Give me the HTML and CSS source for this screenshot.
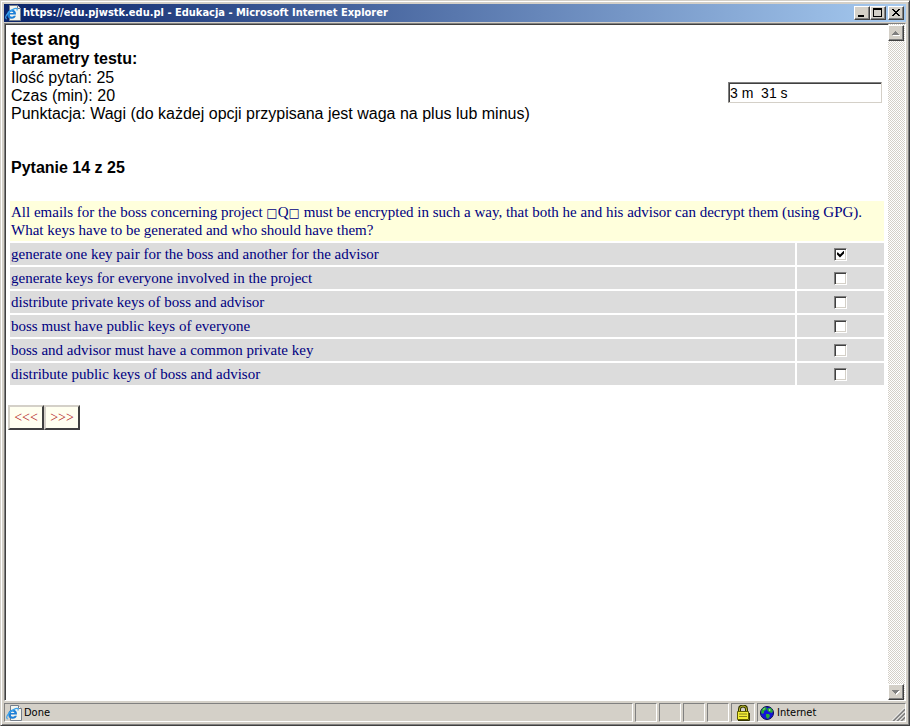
FILE: index.html
```html
<!DOCTYPE html>
<html lang="pl">
<head>
<meta charset="utf-8">
<title>https://edu.pjwstk.edu.pl - Edukacja</title>
<link rel="stylesheet" href="styles.css">
</head>
<body>
<svg class="defs" width="0" height="0" aria-hidden="true">
  <symbol id="ie-page" viewBox="0 0 16 16">
    <path d="M4.500.5h8l3 3v12h-11z" fill="#f5f5ee" stroke="#77808c"/>
    <path d="M12.500.5v3h3" fill="#fff" stroke="#77808c"/>
    <path d="M11 9.500H4.500q.3 2.200 2.400 2.200 1.200 0 2-.9h2q-1 3-4.200 3-4.400 0-4.400-4.500 0-4.500 4.500-4.500 4.400 0 4.200 4.700zM4.700 7.900h3.800q-.2-1.500-1.900-1.500-1.500 0-1.900 1.500z" fill="#1d7fd6"/>
    <path d="M1.800 14q-2-.6-.4-3.700Q4.500 5.500 9.500 3.600q3.600-1 2.300 1.800" fill="none" stroke="#3aa3ee" stroke-width="1.200"/>
  </symbol>
</svg>
<div class="window">
  <header class="titlebar">
    <svg class="icon" aria-hidden="true"><use href="#ie-page"/></svg>
    <h1 class="title">https://edu.pjwstk.edu.pl - Edukacja - Microsoft Internet Explorer</h1>
    <div class="controls">
      <button class="control" aria-label="Minimize"><svg width="12" height="10" shape-rendering="crispEdges"><path d="M2 7h6v2H2z"/></svg></button>
      <button class="control" aria-label="Maximize"><svg width="12" height="10" shape-rendering="crispEdges"><path d="M1 0h9v9H1zM2 2v6h7V2z" fill-rule="evenodd"/></svg></button>
      <button class="control close" aria-label="Close"><svg width="12" height="10" shape-rendering="crispEdges"><path d="M2 1h2v1h1v1h2V2h1V1h2v1H9v1H8v1H7v1h1v1h1v1h1v1H8V7H7V6H5v1H4v1H2V7h1V6h1V5h1V4H4V3H3V2H2z"/></svg></button>
    </div>
  </header>

  <div class="viewport">
    <main class="page">
      <section class="intro">
        <div class="params">
          <h2 class="test-name">test ang</h2>
          <h3 class="heading">Parametry testu:</h3>
          <p>Ilość pytań: 25</p>
          <p>Czas (min): 20</p>
          <p>Punktacja: Wagi (do każdej opcji przypisana jest waga na plus lub minus)</p>
        </div>
        <input class="timer" type="text" aria-label="Czas" value="3 m  31 s" readonly>
      </section>
      <h3 class="heading counter">Pytanie 14 z 25</h3>
      <form>
        <table class="question">
          <thead>
            <tr><th colspan="2">All emails for the boss concerning project <span class="glyph">□</span>Q<span class="glyph">□</span> must be encrypted in such a way, that both he and his advisor can decrypt them (using GPG). What keys have to be generated and who should have them?</th></tr>
          </thead>
          <tbody>
            <tr><td><label for="a1">generate one key pair for the boss and another for the advisor</label></td><td class="pick"><input type="checkbox" id="a1" checked></td></tr>
            <tr><td><label for="a2">generate keys for everyone involved in the project</label></td><td class="pick"><input type="checkbox" id="a2"></td></tr>
            <tr><td><label for="a3">distribute private keys of boss and advisor</label></td><td class="pick"><input type="checkbox" id="a3"></td></tr>
            <tr><td><label for="a4">boss must have public keys of everyone</label></td><td class="pick"><input type="checkbox" id="a4"></td></tr>
            <tr><td><label for="a5">boss and advisor must have a common private key</label></td><td class="pick"><input type="checkbox" id="a5"></td></tr>
            <tr><td><label for="a6">distribute public keys of boss and advisor</label></td><td class="pick"><input type="checkbox" id="a6"></td></tr>
          </tbody>
        </table>
        <div class="nav">
          <button type="button">&lt;&lt;&lt;</button>
          <button type="button">&gt;&gt;&gt;</button>
        </div>
      </form>
    </main>
    <div class="scrollbar">
      <button class="arrow" aria-label="Scroll up"><svg width="10" height="8" shape-rendering="crispEdges"><path d="M5 3h1v1h1v1h1v1h1v1H2V6h1V5h1V4h1z" fill="#fff"/><path d="M4 2h1v1h1v1h1v1h1v1H1V5h1V4h1V3h1z" fill="#808080"/></svg></button>
      <button class="arrow" aria-label="Scroll down"><svg width="10" height="8" shape-rendering="crispEdges"><path d="M2 3h7v1H8v1H7v1H6v1H5V6H4V5H3V4H2z" fill="#fff"/><path d="M1 2h7v1H7v1H6v1H5v1H4V5H3V4H2V3H1z" fill="#808080"/></svg></button>
    </div>
  </div>

  <footer class="statusbar">
    <div class="pane message"><svg class="icon" aria-hidden="true"><use href="#ie-page"/></svg><span>Done</span></div>
    <div class="pane"></div>
    <div class="pane"></div>
    <div class="pane"></div>
    <div class="pane"></div>
    <div class="pane lock">
      <svg class="icon" viewBox="0 0 16 16" aria-hidden="true">
        <path d="M4.500 8V4q0-3 3.500-3t3.500 3v4" fill="none" stroke="#333300" stroke-width="3"/>
        <path d="M4.500 8V4q0-3 3.500-3t3.500 3v4" fill="none" stroke="#b8b830" stroke-width="1"/>
        <path d="M2.500 6.500h11v8h-11z" fill="#f2ee35" stroke="#5f5f00"/>
        <path d="M4 9h8M4 11.500h8" stroke="#8a8420"/>
        <path d="M3 15.500h11.500V8" fill="none" stroke="#333300"/>
      </svg>
    </div>
    <div class="pane zone">
      <svg class="icon" viewBox="0 0 16 16" aria-hidden="true">
        <circle cx="8" cy="8" r="6.500" fill="#1414d8" stroke="#080850"/>
        <path d="M3 4l3-2 2 1-1 2-2 1v2l-2 1-1-2zM9 3l3 0 2 3-1 2-3-1-2-2zM7 9l3 0 1 2-2 3-2-2z" fill="#28a838"/>
        <path d="M4 4l2-1-1 2zM10 4l2 1-2 1z" fill="#a8e8a0"/>
      </svg>
      <span>Internet</span>
      <svg class="grip" width="13" height="13" aria-hidden="true">
        <path d="M1 13L13 1M5 13l8-8M9 13l4-4" stroke="#808080" stroke-width="2"/>
        <path d="M0 12.500L12.500 0M4 12.500L13 3.500M8 12.500l5-5" stroke="#fff"/>
      </svg>
    </div>
  </footer>
</div>
</body>
</html>
```
FILE: styles.css
```css
* {
  box-sizing: border-box;
}

body {
  margin: 0;
  background: #d4d0c8;
  color: #000;
  font: 16px/18px "Liberation Sans", Arial, sans-serif;
}

h1, h2, h3, p {
  margin: 0;
}

button {
  padding: 0;
  font: inherit;
}

.defs {
  position: absolute;
}

.icon {
  flex: none;
  width: 16px;
  height: 16px;
}

/* Window frame */
.window {
  display: flex;
  flex-direction: column;
  min-height: 100vh;
  padding: 2px;
  border: 1px solid;
  border-color: #d4d0c8 #404040 #404040 #d4d0c8;
  box-shadow: inset 1px 1px #fff, inset -1px -1px #808080;
}

.titlebar {
  display: flex;
  align-items: center;
  gap: 2px;
  height: 18px;
  margin: 1px;
  padding: 0 2px 0 1px;
  background: linear-gradient(90deg, #0a246a, #a6caf0);
}

.title {
  flex: 1;
  color: #fff;
  font: bold 11px/18px "DejaVu Sans Condensed", "DejaVu Sans", sans-serif;
  white-space: nowrap;
}

.controls {
  display: flex;
}

.control,
.arrow {
  display: flex;
  align-items: center;
  justify-content: center;
  width: 16px;
  height: 14px;
  border: 1px solid;
  border-color: #fff #404040 #404040 #fff;
  border-radius: 0;
  background: #d4d0c8;
  box-shadow: inset -1px -1px #808080;
}

.close {
  margin-left: 2px;
}

/* Page area */
.viewport {
  display: flex;
  flex: 1;
  margin: 0 1px;
  border: 1px solid;
  border-color: #808080 #fff #fff #808080;
}

.page {
  flex: 1;
  min-width: 0;
  padding: 4px 4px 8px;
  border: solid #404040;
  border-width: 1px 0 0 1px;
  background: #fff;
}

.intro {
  display: flex;
  align-items: flex-end;
  justify-content: space-between;
  padding: 0 2px 0 1px;
}

.test-name {
  margin-bottom: 1px;
  font-size: 18px;
  line-height: 20px;
}

.heading {
  font-size: 16px;
  line-height: 18px;
}

.params .heading {
  margin-bottom: 1px;
}

.timer {
  width: 154px;
  height: 21px;
  margin-bottom: 20px;
  padding: 0 1px;
  border: 1px solid;
  border-color: #808080 #d4d0c8 #d4d0c8 #808080;
  border-radius: 0;
  background: #fff;
  box-shadow: inset 1px 1px #404040;
  font: 14px/18px "Liberation Sans", Arial, sans-serif;
  white-space: pre;
  outline: 0;
}

.counter {
  margin: 36px 1px 22px;
}

.question {
  width: 100%;
  border-spacing: 0 2px;
  color: #000080;
  font: 15px/18px "Liberation Serif", "Times New Roman", serif;
}

.question th {
  padding: 2px 1px;
  background: #ffffdc;
  font-weight: normal;
  line-height: 18px;
  text-align: left;
}

.question td {
  height: 22px;
  padding: 2px 1px;
  background: #dcdcdc;
}

.question .pick {
  width: 89px;
  border-left: 2px solid #fff;
  text-align: center;
}

.pick input {
  appearance: none;
  display: block;
  width: 13px;
  height: 13px;
  margin: 0 auto;
  border: 1px solid;
  border-color: #808080 #fff #fff #808080;
  background: #fff;
  box-shadow: inset 1px 1px #404040, inset -1px -1px #d4d0c8;
}

.pick input:checked::before {
  content: "";
  display: block;
  width: 7px;
  height: 7px;
  margin: 2px;
  background: #000;
  clip-path: polygon(0 2px, 1px 2px, 3px 4px, 7px 0, 7px 3px, 3px 7px, 0 4px);
}

.glyph {
  font-family: "DejaVu Sans", sans-serif;
  font-size: 12px;
  line-height: 1;
}

.nav {
  display: flex;
  margin: 18px -2px 0;
}

.nav button {
  width: 36px;
  height: 25px;
  border: 2px solid;
  border-color: #d4d0c8 #404040 #404040 #d4d0c8;
  background: #fffff0;
  color: #b22222;
  font: 14px/20px "Liberation Serif", "Times New Roman", serif;
}

/* Scroll bar */
.scrollbar {
  display: flex;
  flex: none;
  flex-direction: column;
  justify-content: space-between;
  width: 17px;
  padding: 1px 1px 0 0;
  background: repeating-conic-gradient(#fff 0 25%, #d4d0c8 0 50%) 0 0 / 2px 2px;
}

.arrow {
  height: 16px;
}

/* Status bar */
.statusbar {
  display: flex;
  gap: 2px;
  height: 22px;
  padding: 2px 1px 1px;
  font: 11px/18px "DejaVu Sans Condensed", "DejaVu Sans", sans-serif;
}

.pane {
  display: flex;
  align-items: center;
  width: 22px;
  border: 1px solid;
  border-color: #808080 #fff #fff #808080;
}

.message {
  flex: 1;
  gap: 2px;
  padding-left: 1px;
}

.lock {
  width: 24px;
  justify-content: center;
}

.zone {
  width: 149px;
  gap: 2px;
  padding-left: 1px;
}

.grip {
  align-self: flex-end;
  margin-left: auto;
}
```
